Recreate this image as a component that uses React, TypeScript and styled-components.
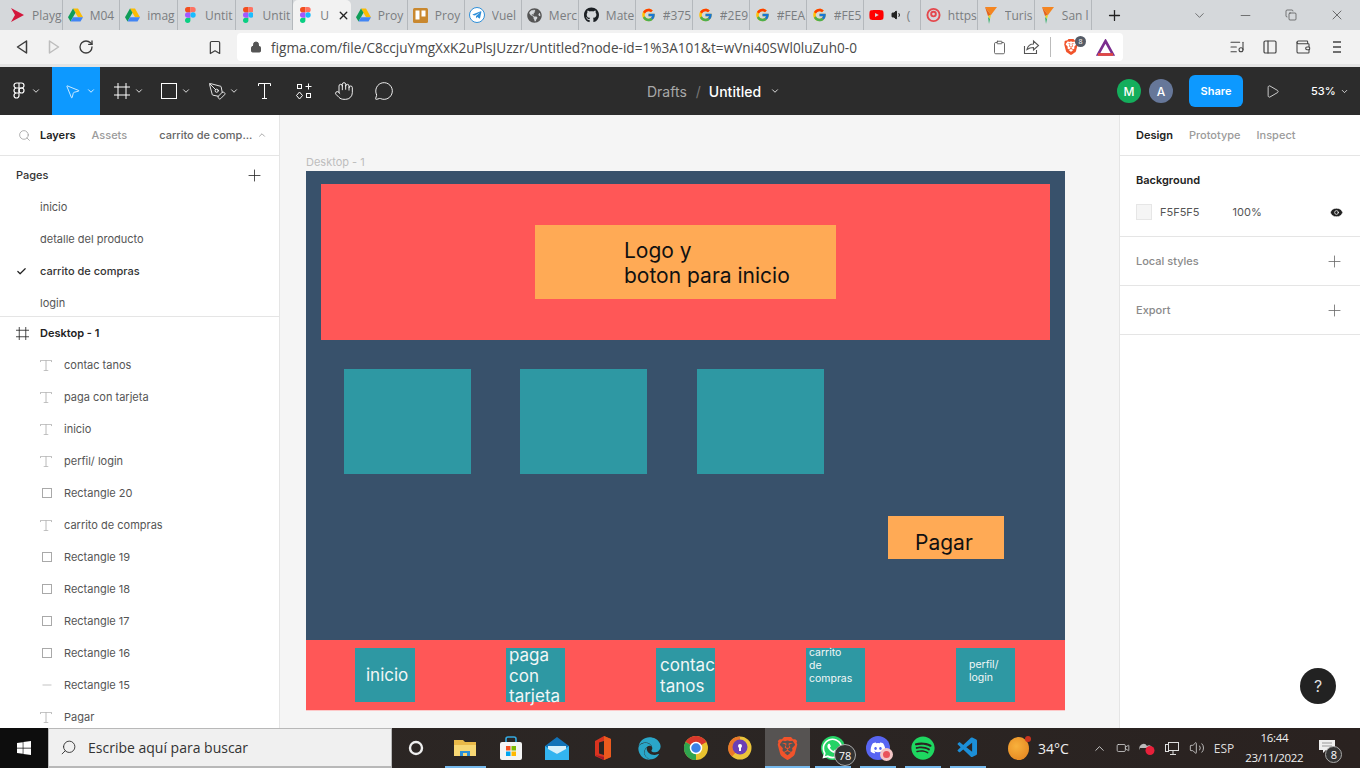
import React from 'react';
import styled, { createGlobalStyle } from 'styled-components';
import {
  Bookmark,
  Check,
  ChevronDown,
  ChevronUp,
  Clipboard,
  Copy,
  Eye,
  Hand,
  ListMusic,
  Lock,
  MessageCircle,
  Minus,
  MousePointer2,
  PanelLeft,
  PenTool,
  Play,
  Plus,
  RotateCw,
  Search,
  Video,
  Volume1,
  Volume2,
  Wallet,
  X,
} from 'lucide-react';
import { FaGithub, FaGlobeAmericas, FaSpotify, FaTelegramPlane, FaWhatsapp, FaWindows, FaDiscord, FaYoutube, FaEdge } from 'react-icons/fa';
import { FcGoogle } from 'react-icons/fc';
import { VscVscode } from 'react-icons/vsc';
import { SiBrave } from 'react-icons/si';

const GlobalStyle = createGlobalStyle`
  html, body { margin: 0; padding: 0; overflow: hidden; background: #f5f5f5; }
  * { box-sizing: border-box; }
`;

const Page = styled.div`
  width: 1360px;
  height: 768px;
  display: flex;
  flex-direction: column;
  overflow: hidden;
  position: relative;
  font-family: Inter, "Liberation Sans", sans-serif;
`;

/* browser chrome */
const TabStrip = styled.div`
  height: 30px;
  flex: none;
  background: #d5d8db;
  display: flex;
  align-items: center;
  padding-left: 5px;
  font-family: "Open Sans", "Noto Sans", sans-serif;
`;

const BrowserTab = styled.div<{ $active?: boolean }>`
  width: 57.65px;
  height: 30px;
  flex: none;
  display: flex;
  align-items: center;
  gap: 7px;
  padding-left: 5px;
  overflow: hidden;
  white-space: nowrap;
  font-size: 12px;
  color: #7a7d80;
  background: ${({ $active }) => ($active ? '#f2f2f2' : 'transparent')};
  border-radius: ${({ $active }) => ($active ? '5px 5px 0 0' : '0')};
  border-right: 1px solid ${({ $active }) => ($active ? 'transparent' : '#b4b8bc')};
  &:nth-child(n + 7) {
    width: 57px;
  }
`;

const TabIcon = styled.span`
  width: 15px;
  height: 16px;
  flex: none;
  display: flex;
  align-items: center;
  justify-content: center;
`;

const TabLabel = styled.span`
  flex: 1;
  display: flex;
  align-items: center;
  gap: 4px;
  overflow: hidden;
`;

const TelegramBadge = styled.span`
  display: flex;
  width: 16px;
  height: 16px;
  flex: none;
  border-radius: 50%;
  border: 1px solid #2e8fd9;
  align-items: center;
  justify-content: center;
  color: #2e8fd9;
  background: #fff;
`;

const NewTab = styled.div`
  margin-left: 14px;
  color: #222;
  display: flex;
`;

const WindowControls = styled.div`
  margin-left: auto;
  display: flex;
  align-items: center;
  color: #333;
`;

const WindowButton = styled.div`
  width: 46px;
  height: 30px;
  display: flex;
  align-items: center;
  justify-content: center;
`;

const BrowserBar = styled.div`
  height: 34px;
  flex: none;
  background: #f2f2f2;
  display: flex;
  align-items: center;
  color: #444;
`;

const NavButton = styled.div<{ $left: number; $dim?: boolean }>`
  width: 16px;
  margin-left: ${({ $left }) => $left}px;
  flex: none;
  display: flex;
  justify-content: center;
  color: ${({ $dim }) => ($dim ? '#b5b5b5' : '#3c3c3c')};
`;

const UrlBox = styled.div`
  width: 886px;
  height: 28px;
  margin-left: 14px;
  background: #fff;
  border-radius: 4px;
  display: flex;
  align-items: center;
  padding-left: 13px;
  color: #555;
  font-family: "Open Sans", "Noto Sans", sans-serif;
`;

const UrlText = styled.span`
  margin-left: 9px;
  font-size: 13.6px;
  color: #4a4a4a;
  white-space: nowrap;
`;

const UrlActions = styled.div`
  margin-left: auto;
  display: flex;
  align-items: center;
  gap: 13px;
  padding-right: 8px;
`;

const ClipIcon = styled(Clipboard)`
  margin-right: 3px;
`;

const UrlDivider = styled.div`
  width: 1px;
  height: 20px;
  background: #bbb;
  margin: 0 -1px 0 -3px;
`;

const BadgeWrap = styled.div`
  position: relative;
  display: flex;
  margin-right: 4px;
`;

const TinyBadge = styled.span`
  position: absolute;
  top: -3px;
  right: -7px;
  width: 11px;
  height: 11px;
  border-radius: 50%;
  background: #555b66;
  color: #fff;
  font-size: 7px;
  display: flex;
  align-items: center;
  justify-content: center;
`;

const ToolbarIcons = styled.div`
  margin-left: 106px;
  display: flex;
  align-items: center;
  gap: 17px;
`;

const Hamburger = styled.svg`
  margin-left: 3px;
`;

const Gutter = styled.div`
  height: 3px;
  flex: none;
  background: #e4e4e4;
`;

/* figma top bar */
const FigmaBar = styled.div`
  height: 48px;
  flex: none;
  background: #2c2c2c;
  color: #fff;
  display: flex;
  align-items: center;
  position: relative;
`;

const Tool = styled.div<{ $active?: boolean; $w?: number; $pad?: number }>`
  width: ${({ $w }) => $w || 48}px;
  height: 48px;
  flex: none;
  display: flex;
  align-items: center;
  padding-left: ${({ $pad }) => ($pad === undefined ? 12 : $pad)}px;
  gap: 2px;
  background: ${({ $active }) => ($active ? '#0d99ff' : 'transparent')};
`;

const ToolIcon = styled.span<{ $start?: boolean }>`
  width: 20px;
  flex: none;
  display: flex;
  align-items: center;
  justify-content: ${({ $start }) => ($start ? 'flex-start' : 'center')};
`;

const PlainTool = styled.div`
  width: 40px;
  height: 48px;
  flex: none;
  display: flex;
  align-items: center;
  justify-content: center;
`;

const FileTitle = styled.div`
  position: absolute;
  left: 647px;
  top: 0;
  height: 48px;
  display: flex;
  align-items: center;
  font-size: 14px;
`;

const Crumb = styled.span`
  color: #a8a8a8;
`;

const Slash = styled.span`
  color: #777;
  margin: 0 8px 0 9px;
`;

const TitleName = styled.span`
  font-weight: 500;
  margin-right: 9px;
`;

const BarRight = styled.div`
  margin-left: auto;
  display: flex;
  align-items: center;
`;

const Avatar = styled.div<{ $bg: string }>`
  width: 24px;
  height: 24px;
  border-radius: 50%;
  background: ${({ $bg }) => $bg};
  color: #fff;
  font-size: 12px;
  font-weight: 500;
  display: flex;
  align-items: center;
  justify-content: center;
  margin-right: 8px;
`;

const ShareButton = styled.div`
  width: 54px;
  height: 32px;
  margin-left: 8px;
  border-radius: 6px;
  background: #0d99ff;
  font-size: 11px;
  font-weight: 600;
  display: flex;
  align-items: center;
  justify-content: center;
`;

const PlayBox = styled.div`
  margin-left: 22px;
  display: flex;
`;

const Zoom = styled.div`
  margin-left: 31px;
  margin-right: 6px;
  width: 43px;
  font-size: 11px;
  font-weight: 500;
  display: flex;
  align-items: center;
  gap: 4px;
`;

/* workspace */
const Workspace = styled.div`
  flex: 1;
  min-height: 0;
  display: flex;
`;

const LeftPanel = styled.aside`
  width: 280px;
  flex: none;
  background: #fff;
  border-right: 1px solid #e5e5e5;
  overflow: hidden;
  font-size: 11px;
  color: #333;
`;

const PanelTabs = styled.div`
  height: 41px;
  border-bottom: 1px solid #e5e5e5;
  display: flex;
  align-items: center;
  font-size: 11px;
`;

const SearchIcon = styled(Search)`
  margin-left: 18px;
`;

const PanelTab = styled.span<{ $left: number; $on?: boolean }>`
  margin-left: ${({ $left }) => $left}px;
  font-weight: ${({ $on }) => ($on ? 600 : 500)};
  color: ${({ $on }) => ($on ? '#222' : '#9b9b9b')};
  white-space: nowrap;
`;

const PageMenu = styled.span`
  margin-left: 32px;
  color: #666;
  font-weight: 500;
  white-space: nowrap;
  display: flex;
  align-items: center;
  gap: 5px;
`;

const PagesSection = styled.div`
  height: 161px;
  border-bottom: 1px solid #e5e5e5;
  overflow: hidden;
`;

const PagesHead = styled.div`
  height: 35px;
  padding: 3px 15px 0 16px;
  display: flex;
  align-items: center;
  justify-content: space-between;
  font-weight: 500;
  color: #333;
`;

const PageRow = styled.div<{ $on?: boolean }>`
  height: 32px;
  display: flex;
  align-items: center;
  padding-left: 16px;
  color: ${({ $on }) => ($on ? '#333' : '#555')};
  font-weight: ${({ $on }) => ($on ? 500 : 400)};
`;

const CheckSlot = styled.span`
  width: 24px;
  flex: none;
  display: flex;
  color: #222;
`;

const LayerRow = styled.div<{ $top?: boolean }>`
  height: 32px;
  display: flex;
  align-items: center;
  padding-left: ${({ $top }) => ($top ? 16 : 40)}px;
  color: ${({ $top }) => ($top ? '#222' : '#555')};
  font-weight: ${({ $top }) => ($top ? 600 : 400)};
  white-space: nowrap;
`;

const LayerIcon = styled.span<{ $top?: boolean }>`
  width: 24px;
  flex: none;
  display: flex;
  color: ${({ $top }) => ($top ? '#222' : '#a9a9a9')};
`;

const RectGlyph = styled.svg`
  margin-left: 2px;
`;

const Canvas = styled.main`
  flex: 1;
  background: #f5f5f5;
  position: relative;
  overflow: hidden;
`;

const FrameLabel = styled.span`
  position: absolute;
  left: 26px;
  top: 40px;
  font-size: 11px;
  color: #bdbdbd;
`;

const Frame = styled.div`
  position: absolute;
  left: 26px;
  top: 56px;
  width: 759px;
  height: 539px;
  background: #38516b;
  box-shadow: 0 1px 0 #fdc8c8;
`;

const Node = styled.div<{ $x: number; $y: number; $w: number; $h: number; $fill: string }>`
  position: absolute;
  left: ${({ $x }) => $x}px;
  top: ${({ $y }) => $y}px;
  width: ${({ $w }) => $w}px;
  height: ${({ $h }) => $h}px;
  background: ${({ $fill }) => $fill};
`;

const NodeText = styled.div<{ $x: number; $y: number; $size: number; $lh: number; $color?: string }>`
  position: absolute;
  left: ${({ $x }) => $x}px;
  top: ${({ $y }) => $y}px;
  font-size: ${({ $size }) => $size}px;
  line-height: ${({ $lh }) => $lh}px;
  color: ${({ $color }) => $color || '#f2f6f6'};
  white-space: pre;
`;

const HelpButton = styled.div`
  position: absolute;
  right: 24px;
  bottom: 24px;
  width: 36px;
  height: 36px;
  border-radius: 50%;
  background: #222;
  color: #ddd;
  font-size: 16px;
  display: flex;
  align-items: center;
  justify-content: center;
`;

const RightPanel = styled.aside`
  width: 240px;
  flex: none;
  background: #fff;
  box-shadow: -1px 0 0 #e5e5e5;
  font-size: 11px;
  color: #333;
  position: relative;
`;

const Section = styled.div<{ $h: number }>`
  height: ${({ $h }) => $h}px;
  border-bottom: 1px solid #e5e5e5;
  padding: 0 16px;
`;

const BackgroundSection = styled(Section)`
  padding-top: 4px;
`;

const SectionHead = styled.div<{ $bold?: boolean; $h: number }>`
  height: ${({ $h }) => $h}px;
  display: flex;
  align-items: center;
  justify-content: space-between;
  font-weight: ${({ $bold }) => ($bold ? 600 : 500)};
  color: ${({ $bold }) => ($bold ? '#222' : '#8a8a8a')};
`;

const ColorRow = styled.div`
  height: 24px;
  display: flex;
  align-items: center;
  color: #555;
`;

const Swatch = styled.span`
  width: 16px;
  height: 16px;
  background: #f5f5f5;
  border: 1px solid #e6e6e6;
  margin-right: 8px;
`;

const Percent = styled.span`
  margin-left: 33px;
`;

const EyeSlot = styled.span`
  margin-left: auto;
  display: flex;
  color: #222;
`;

/* windows taskbar */
const Taskbar = styled.footer`
  height: 40px;
  flex: none;
  display: flex;
  align-items: stretch;
  background: linear-gradient(90deg, #2c2523 0%, #2b2624 50%, #2a2220 100%);
  color: #f0f0f0;
  font-family: "Open Sans", "Noto Sans", sans-serif;
`;

const StartButton = styled.div`
  width: 48px;
  background: #0d0d0d;
  display: flex;
  align-items: center;
  justify-content: center;
  color: #fff;
`;

const SearchBox = styled.div`
  width: 344px;
  background: #f0f0f0;
  border: 1px solid #b8b8b8;
  border-bottom-width: 2px;
  display: flex;
  align-items: center;
  padding-left: 11px;
  gap: 11px;
  color: #333;
  font-size: 14px;
`;

const MirrorSearch = styled(Search)`
  transform: scaleX(-1);
`;

const TaskApps = styled.div`
  display: flex;
  align-items: stretch;
`;

const TaskApp = styled.div<{ $w?: number; $on?: boolean; $open?: boolean }>`
  width: ${({ $w }) => $w || 45}px;
  position: relative;
  display: flex;
  align-items: center;
  justify-content: center;
  background: ${({ $on }) => ($on ? '#565352' : 'transparent')};
  &::after {
    content: '';
    display: ${({ $open }) => ($open ? 'block' : 'none')};
    position: absolute;
    left: ${({ $on }) => ($on ? 0 : 5)}px;
    right: ${({ $on }) => ($on ? 0 : 4)}px;
    bottom: 0;
    height: 2px;
    background: #76b9ed;
  }
`;

const AppDisc = styled.span<{ $bg: string }>`
  width: 24px;
  height: 24px;
  border-radius: 50%;
  background: ${({ $bg }) => $bg};
  display: flex;
  align-items: center;
  justify-content: center;
`;

const Count = styled.span`
  position: absolute;
  left: 24px;
  top: 16px;
  width: 22px;
  height: 22px;
  border-radius: 50%;
  background: #333;
  border: 1px solid #aaa;
  color: #fff;
  font-size: 11px;
  display: flex;
  align-items: center;
  justify-content: center;
`;

const RedDot = styled.span`
  position: absolute;
  left: 25px;
  top: 20px;
  width: 13px;
  height: 13px;
  border-radius: 50%;
  background: #e9525a;
  border: 3px solid #f3c6c6;
`;

const Weather = styled.div`
  margin-left: 18px;
  display: flex;
  align-items: center;
  gap: 9px;
  font-size: 14px;
`;

const Sun = styled.span`
  width: 21px;
  height: 23px;
  border-radius: 50%;
  position: relative;
  background: radial-gradient(circle at 40% 40%, #f8b13c, #e27f1c);
  &::after {
    content: '';
    position: absolute;
    right: -2px;
    top: -1px;
    width: 6px;
    height: 6px;
    border-radius: 50%;
    background: #c8321e;
  }
`;

const Tray = styled.div`
  margin-left: 23px;
  display: flex;
  align-items: center;
  gap: 9px;
  color: #ddd;
`;

const Lang = styled.span`
  font-size: 12px;
`;

const Clock = styled.div`
  margin-left: 11px;
  width: 58px;
  font-size: 11.5px;
  letter-spacing: -0.3px;
  line-height: 20px;
  text-align: center;
  white-space: nowrap;
  align-self: center;
`;

const Notify = styled.div`
  margin-left: 16px;
  position: relative;
  display: flex;
  align-items: flex-start;
  padding-top: 12px;
`;

const NotifyCount = styled(Count)`
  left: 6px;
  top: 18px;
  width: 17px;
  height: 17px;
`;

const FigmaLogo = ({ size = 16 }: { size?: number }) => (
  <svg width={size * 0.67} height={size} viewBox="0 0 24 36">
    <path d="M6 36a6 6 0 0 0 6-6v-6H6a6 6 0 0 0 0 12z" fill="#0acf83" />
    <path d="M0 18a6 6 0 0 1 6-6h6v12H6a6 6 0 0 1-6-6z" fill="#a259ff" />
    <path d="M0 6a6 6 0 0 1 6-6h6v12H6A6 6 0 0 1 0 6z" fill="#f24e1e" />
    <path d="M12 0h6a6 6 0 0 1 0 12h-6z" fill="#ff7262" />
    <path d="M24 18a6 6 0 1 1-12 0 6 6 0 0 1 12 0z" fill="#1abcfe" />
  </svg>
);

const DriveLogo = () => (
  <svg width="16" height="14" viewBox="0 0 24 21">
    <path d="M8 0h8l8 14h-8z" fill="#fbbc04" />
    <path d="M8 0L0 14l4 7 8-14z" fill="#0f9d58" />
    <path d="M4 21h16l4-7H8z" fill="#4285f4" />
  </svg>
);

const FlagLogo = () => (
  <svg width="13" height="17" viewBox="0 0 13 17">
    <path d="M1 0h12L7 8z" fill="#f5851f" />
    <path d="M1 0l6 8-3 1z" fill="#e5641b" />
    <path d="M4 9l3-1-1 4z" fill="#e8d61e" />
    <path d="M4 10l2 2-1 5z" fill="#34b06a" />
  </svg>
);

const PageIcon = () => (
  <svg width="18" height="18" viewBox="0 0 18 18" fill="none" stroke="#fff" strokeWidth="1">
    <rect x="2.5" y="2.5" width="4" height="4" />
    <rect x="11.5" y="11.5" width="4" height="4" />
    <path d="M13.5 1.5v6M10.5 4.5h6" />
    <path d="M4.5 10l3 3.5-3 3.5-3-3.5z" />
  </svg>
);

const FrameIcon = ({ size = 16 }: { size?: number }) => (
  <svg width={size} height={size} viewBox="0 0 16 16" fill="none" stroke="currentColor">
    <path d="M4 0v16M12 0v16M0 4h16M0 12h16" />
  </svg>
);

const RectIcon = () => (
  <svg width="16" height="16" viewBox="0 0 16 16" fill="none" stroke="currentColor">
    <rect x=".5" y=".5" width="15" height="15" />
  </svg>
);

const TextIcon = ({ w = 13, h = 16 }: { w?: number; h?: number }) => (
  <svg width={w} height={h} viewBox="0 0 13 16" fill="none" stroke="currentColor" preserveAspectRatio="none">
    <path d="M.5 3V.5h12V3M6.5.5v15M4 15.5h5" />
  </svg>
);

const ShareBoxIcon = () => (
  <svg width="17" height="16" viewBox="0 0 17 16" fill="none" stroke="currentColor" strokeWidth="1.1">
    <path d="M1.5 7v7.5h12V11" />
    <path d="M4 10.5c1-4 4-5.5 6.5-5.5V2L15.5 6.5 10.5 11V8.5C8 8.5 6 9 4 10.5z" />
  </svg>
);

const NavArrow = ({ dim }: { dim?: boolean }) => (
  <svg width="12" height="16" viewBox="0 0 12 16" fill="none" stroke={dim ? '#bdbdbd' : '#3c3c3c'} strokeWidth="1.5">
    <path d={dim ? 'M1.5 2v12L10.5 8z' : 'M10.5 2v12L1.5 8z'} strokeLinejoin="round" />
  </svg>
);

const OfficeLogo = () => (
  <svg width="18" height="24" viewBox="0 0 18 24">
    <path d="M2 5l9-5 7 3v18l-7 3-9-4z" fill="#d8331f" />
    <path d="M11 0l7 3v18l-7 3z" fill="#eb5a1e" />
    <path d="M6 6.5l5-1.5v14l-5-1.5z" fill="#2a2422" />
    <path d="M2 19l9 5 0-3-9-2z" fill="#a5192b" />
  </svg>
);

const tabs: { icon: React.ReactNode; label: React.ReactNode; active?: boolean }[] = [
  { icon: <svg width="15" height="16" viewBox="0 0 15 16"><path d="M1 1l13 7-13 7 4-7z" fill="#d3173c" /></svg>, label: 'Playg' },
  { icon: <DriveLogo />, label: 'M04' },
  { icon: <DriveLogo />, label: 'imag' },
  { icon: <FigmaLogo />, label: 'Untit' },
  { icon: <FigmaLogo />, label: 'Untit' },
  { icon: <FigmaLogo />, label: 'U', active: true },
  { icon: <DriveLogo />, label: 'Proy' },
  { icon: <svg width="15" height="15" viewBox="0 0 15 15"><rect width="15" height="15" rx="1.5" fill="#c9882f" /><rect x="2.5" y="2.5" width="4" height="9" fill="#fff" /><rect x="8.5" y="2.5" width="4" height="6" fill="#fff" /></svg>, label: 'Proy' },
  { icon: <TelegramBadge><FaTelegramPlane size={10} /></TelegramBadge>, label: 'Vuel' },
  { icon: <FaGlobeAmericas size={15} color="#555" />, label: 'Merc' },
  { icon: <FaGithub size={16} color="#1b1f23" />, label: 'Mate' },
  { icon: <FcGoogle size={16} />, label: '#375' },
  { icon: <FcGoogle size={16} />, label: '#2E9' },
  { icon: <FcGoogle size={16} />, label: '#FEA' },
  { icon: <FcGoogle size={16} />, label: '#FE5' },
  { icon: <FaYoutube size={16} color="#f00" />, label: <><Volume1 size={12} color="#222" fill="#222" />(</> },
  { icon: <svg width="16" height="16" viewBox="0 0 16 16" fill="none" stroke="#e4484d" strokeWidth="2"><circle cx="8" cy="8" r="6.5" /><circle cx="8" cy="7" r="2.5" /></svg>, label: 'https' },
  { icon: <FlagLogo />, label: 'Turis' },
  { icon: <FlagLogo />, label: 'San l' },
];

const pages = ['inicio', 'detalle del producto', 'carrito de compras', 'login'];

const layers: { name: string; kind: 'text' | 'rect' | 'line' }[] = [
  { name: 'contac tanos', kind: 'text' },
  { name: 'paga con tarjeta', kind: 'text' },
  { name: 'inicio', kind: 'text' },
  { name: 'perfil/ login', kind: 'text' },
  { name: 'Rectangle 20', kind: 'rect' },
  { name: 'carrito de compras', kind: 'text' },
  { name: 'Rectangle 19', kind: 'rect' },
  { name: 'Rectangle 18', kind: 'rect' },
  { name: 'Rectangle 17', kind: 'rect' },
  { name: 'Rectangle 16', kind: 'rect' },
  { name: 'Rectangle 15', kind: 'line' },
  { name: 'Pagar', kind: 'text' },
];

const RED = '#ff5757';
const ORANGE = '#ffaa55';
const TEAL = '#2e98a3';

const App: React.FC = () => (
  <Page>
    <GlobalStyle />
    <TabStrip>
      {tabs.map((tab, index) => (
        <BrowserTab key={index} $active={tab.active}>
          <TabIcon>{tab.icon}</TabIcon>
          <TabLabel>{tab.label}</TabLabel>
          {tab.active && <X size={13} color="#222" strokeWidth={2.5} />}
        </BrowserTab>
      ))}
      <NewTab>
        <Plus size={17} strokeWidth={1.8} />
      </NewTab>
      <WindowControls>
        <WindowButton><ChevronDown size={15} strokeWidth={1} /></WindowButton>
        <WindowButton><Minus size={15} strokeWidth={1} /></WindowButton>
        <WindowButton><Copy size={12} strokeWidth={1.2} /></WindowButton>
        <WindowButton><X size={16} strokeWidth={1} /></WindowButton>
      </WindowControls>
    </TabStrip>

    <BrowserBar>
      <NavButton $left={14}><NavArrow /></NavButton>
      <NavButton $left={16} $dim><NavArrow dim /></NavButton>
      <NavButton $left={16}><RotateCw size={16} strokeWidth={2} /></NavButton>
      <NavButton $left={113}><Bookmark size={17} strokeWidth={1.8} /></NavButton>
      <UrlBox>
        <Lock size={12} fill="#555" strokeWidth={2} />
        <UrlText>figma.com/file/C8ccjuYmgXxK2uPlsJUzzr/Untitled?node-id=1%3A101&amp;t=wVni40SWl0luZuh0-0</UrlText>
        <UrlActions>
          <ClipIcon size={15} strokeWidth={1.4} />
          <ShareBoxIcon />
          <UrlDivider />
          <BadgeWrap>
            <SiBrave size={16} color="#f1532b" />
            <TinyBadge>8</TinyBadge>
          </BadgeWrap>
          <svg width="19" height="17" viewBox="0 0 19 17" fill="none">
            <path d="M9.5 2L17 15.5H2z" stroke="#7b2d8e" strokeWidth="2.6" />
            <path d="M2 15.5h15" stroke="#e4483f" strokeWidth="2.6" />
          </svg>
        </UrlActions>
      </UrlBox>
      <ToolbarIcons>
        <ListMusic size={16} strokeWidth={1.6} />
        <PanelLeft size={16} strokeWidth={1.8} />
        <Wallet size={16} strokeWidth={1.6} />
        <Hamburger width="12" height="14" viewBox="0 0 12 14" fill="none" stroke="currentColor" strokeWidth="1.6">
          <path d="M2 2h8M2 7h8M2 12h8" />
        </Hamburger>
      </ToolbarIcons>
    </BrowserBar>
    <Gutter />

    <FigmaBar>
      <Tool $w={52} $pad={9}>
        <ToolIcon>
          <svg width="12" height="18" viewBox="0 0 24 36" fill="none" stroke="#fff" strokeWidth="2.4">
            <path d="M12 2H7a5 5 0 0 0 0 10h5zM12 2h5a5 5 0 0 1 0 10h-5zM12 12H7a5 5 0 0 0 0 10h5zM12 22H7a5 5 0 1 0 5 5z" />
            <circle cx="17" cy="17" r="5" />
          </svg>
        </ToolIcon>
        <ChevronDown size={10} strokeWidth={2} />
      </Tool>
      <Tool $active>
        <ToolIcon $start><MousePointer2 size={17} strokeWidth={1.1} /></ToolIcon>
        <ChevronDown size={10} strokeWidth={2} />
      </Tool>
      <Tool>
        <ToolIcon><FrameIcon /></ToolIcon>
        <ChevronDown size={10} strokeWidth={2} />
      </Tool>
      <Tool $pad={11}>
        <ToolIcon><RectIcon /></ToolIcon>
        <ChevronDown size={10} strokeWidth={2} />
      </Tool>
      <Tool $pad={11}>
        <ToolIcon><PenTool size={19} strokeWidth={1.1} /></ToolIcon>
        <ChevronDown size={10} strokeWidth={2} />
      </Tool>
      <PlainTool><TextIcon /></PlainTool>
      <PlainTool><PageIcon /></PlainTool>
      <PlainTool><Hand size={20} strokeWidth={1.1} /></PlainTool>
      <PlainTool><MessageCircle size={20} strokeWidth={1.1} /></PlainTool>
      <FileTitle>
        <Crumb>Drafts</Crumb>
        <Slash>/</Slash>
        <TitleName>Untitled</TitleName>
        <ChevronDown size={10} strokeWidth={2} />
      </FileTitle>
      <BarRight>
        <Avatar $bg="#14ae5c">M</Avatar>
        <Avatar $bg="#667799">A</Avatar>
        <ShareButton>Share</ShareButton>
        <PlayBox><Play size={15} strokeWidth={1.2} /></PlayBox>
        <Zoom>53% <ChevronDown size={9} strokeWidth={2} /></Zoom>
      </BarRight>
    </FigmaBar>

    <Workspace>
      <LeftPanel>
        <PanelTabs>
          <SearchIcon size={13} color="#999" strokeWidth={1.4} />
          <PanelTab $left={9} $on>Layers</PanelTab>
          <PanelTab $left={16}>Assets</PanelTab>
          <PageMenu>carrito de comp... <ChevronUp size={10} color="#999" /></PageMenu>
        </PanelTabs>
        <PagesSection>
          <PagesHead>
            Pages
            <Plus size={19} color="#222" strokeWidth={1} />
          </PagesHead>
          {pages.map(page => (
            <PageRow key={page} $on={page === 'carrito de compras'}>
              <CheckSlot>{page === 'carrito de compras' && <Check size={11} strokeWidth={2.6} />}</CheckSlot>
              {page}
            </PageRow>
          ))}
        </PagesSection>
        <LayerRow $top>
          <LayerIcon $top><FrameIcon size={13} /></LayerIcon>
          Desktop - 1
        </LayerRow>
        {layers.map(layer => (
          <LayerRow key={layer.name}>
            <LayerIcon>
              {layer.kind === 'text' && <TextIcon w={12} h={11} />}
              {layer.kind === 'rect' && (
                <RectGlyph width="10" height="10" viewBox="0 0 10 10" fill="none" stroke="currentColor">
                  <rect x=".5" y=".5" width="9" height="9" />
                </RectGlyph>
              )}
              {layer.kind === 'line' && <Minus size={14} strokeWidth={1.2} />}
            </LayerIcon>
            {layer.name}
          </LayerRow>
        ))}
      </LeftPanel>

      <Canvas>
        <FrameLabel>Desktop - 1</FrameLabel>
        <Frame>
          <Node $x={15} $y={13} $w={729} $h={156} $fill={RED} />
          <Node $x={229} $y={54} $w={301} $h={74} $fill={ORANGE} />
          <NodeText $x={318} $y={67} $size={21} $lh={25} $color="#111">{'Logo y\nboton para inicio'}</NodeText>
          <Node $x={38} $y={198} $w={127} $h={105} $fill={TEAL} />
          <Node $x={214} $y={198} $w={127} $h={105} $fill={TEAL} />
          <Node $x={391} $y={198} $w={127} $h={105} $fill={TEAL} />
          <Node $x={582} $y={345} $w={116} $h={43} $fill={ORANGE} />
          <NodeText $x={609} $y={359} $size={21} $lh={26} $color="#111">Pagar</NodeText>
          <Node $x={0} $y={469} $w={759} $h={70} $fill={RED} />
          <Node $x={49} $y={477} $w={60} $h={54} $fill={TEAL} />
          <Node $x={200} $y={477} $w={59} $h={54} $fill={TEAL} />
          <Node $x={350} $y={477} $w={59} $h={54} $fill={TEAL} />
          <Node $x={500} $y={477} $w={59} $h={54} $fill={TEAL} />
          <Node $x={650} $y={477} $w={59} $h={54} $fill={TEAL} />
          <NodeText $x={60} $y={493} $size={17} $lh={22}>inicio</NodeText>
          <NodeText $x={203} $y={474} $size={17} $lh={20.5}>{'paga\ncon\ntarjeta'}</NodeText>
          <NodeText $x={354} $y={484} $size={17} $lh={20.5}>{'contac\ntanos'}</NodeText>
          <NodeText $x={503} $y={475} $size={10.5} $lh={13}>{'carrito\nde\ncompras'}</NodeText>
          <NodeText $x={663} $y={488} $size={10.5} $lh={12.5}>{'perfil/\nlogin'}</NodeText>
        </Frame>
      </Canvas>

      <RightPanel>
        <PanelTabs>
          <PanelTab $left={16} $on>Design</PanelTab>
          <PanelTab $left={16}>Prototype</PanelTab>
          <PanelTab $left={16}>Inspect</PanelTab>
        </PanelTabs>
        <BackgroundSection $h={81}>
          <SectionHead $bold $h={40}>Background</SectionHead>
          <ColorRow>
            <Swatch />
            F5F5F5
            <Percent>100%</Percent>
            <EyeSlot><Eye size={15} fill="#222" stroke="#fff" strokeWidth={1.2} /></EyeSlot>
          </ColorRow>
        </BackgroundSection>
        <Section $h={49}>
          <SectionHead $h={48}>Local styles <Plus size={19} color="#666" strokeWidth={1} /></SectionHead>
        </Section>
        <Section $h={49}>
          <SectionHead $h={48}>Export <Plus size={19} color="#666" strokeWidth={1} /></SectionHead>
        </Section>
        <HelpButton>?</HelpButton>
      </RightPanel>
    </Workspace>

    <Taskbar>
      <StartButton><FaWindows size={16} /></StartButton>
      <SearchBox>
        <MirrorSearch size={17} strokeWidth={1.3} />
        Escribe aquí para buscar
      </SearchBox>
      <TaskApps>
        <TaskApp $w={48}>
          <svg width="16" height="16" viewBox="0 0 16 16" fill="none" stroke="#eee" strokeWidth="2.4"><circle cx="8" cy="8" r="6" /></svg>
        </TaskApp>
        <TaskApp $w={50} $open>
          <svg width="22" height="20" viewBox="0 0 22 20">
            <path d="M0 2h9l2 2h11v14H0z" fill="#e9b949" />
            <path d="M0 7h22v11H0z" fill="#f7d774" />
            <path d="M6 13h10v5H6z" fill="#2b90d9" />
            <path d="M9 15h4v3H9z" fill="#f7d774" />
          </svg>
        </TaskApp>
        <TaskApp $w={42}>
          <svg width="22" height="24" viewBox="0 0 22 24">
            <path d="M6 7V3a2 2 0 0 1 2-2h6a2 2 0 0 1 2 2v4" fill="none" stroke="#35a9e0" strokeWidth="1.6" />
            <rect y="6" width="22" height="18" rx="2" fill="#f4f4f4" />
            <rect x="6" y="10" width="4.5" height="4.5" fill="#f25022" />
            <rect x="11.5" y="10" width="4.5" height="4.5" fill="#7fba00" />
            <rect x="6" y="15.5" width="4.5" height="4.5" fill="#00a4ef" />
            <rect x="11.5" y="15.5" width="4.5" height="4.5" fill="#ffb900" />
          </svg>
        </TaskApp>
        <TaskApp $w={50}>
          <svg width="24" height="23" viewBox="0 0 24 23">
            <path d="M12 0l12 9v14H0V9z" fill="#1273b8" />
            <path d="M0 9l12 8 12-8v14H0z" fill="#33b4f0" />
            <path d="M3 9h18v3l-9 5-9-5z" fill="#d7f0fb" />
          </svg>
        </TaskApp>
        <TaskApp $w={40}><OfficeLogo /></TaskApp>
        <TaskApp $w={55}><FaEdge size={23} color="#2aa6c9" /></TaskApp>
        <TaskApp $w={38}>
          <svg width="24" height="24" viewBox="0 0 24 24">
            <circle cx="12" cy="12" r="12" fill="#e8c22e" />
            <path d="M12 12L1.6 6a12 12 0 0 1 20.8 0z" fill="#d9382c" />
            <path d="M12 12L1.6 6a12 12 0 0 0 10.4 18z" fill="#2fa44f" />
            <circle cx="12" cy="12" r="5.5" fill="#3b82e8" stroke="#fff" strokeWidth="1.5" />
          </svg>
        </TaskApp>
        <TaskApp $w={50}>
          <svg width="24" height="24" viewBox="0 0 24 24">
            <circle cx="12" cy="12" r="11.5" fill="#ecc43a" />
            <path d="M12 .5a11.5 11.5 0 0 0-8 20L12 12z" fill="#e9792a" />
            <circle cx="12" cy="11" r="7.5" fill="#6a3fb5" />
            <circle cx="12" cy="10" r="2" fill="#fff" />
            <path d="M11 10h2v5h-2z" fill="#fff" />
          </svg>
        </TaskApp>
        <TaskApp $on $open><SiBrave size={23} color="#f1532b" /></TaskApp>
        <TaskApp $open>
          <AppDisc $bg="#25d366"><FaWhatsapp size={23} color="#fff" /></AppDisc>
          <Count>78</Count>
        </TaskApp>
        <TaskApp $open>
          <AppDisc $bg="#5865f2"><FaDiscord size={16} color="#fff" /></AppDisc>
          <RedDot />
        </TaskApp>
        <TaskApp $open><FaSpotify size={24} color="#1ed760" /></TaskApp>
        <TaskApp $open><VscVscode size={24} color="#1c8fd8" /></TaskApp>
      </TaskApps>
      <Weather>
        <Sun />
        34°C
      </Weather>
      <Tray>
        <ChevronUp size={15} strokeWidth={1.4} />
        <Video size={14} strokeWidth={1.3} />
        <svg width="16" height="14" viewBox="0 0 16 14"><path d="M1 9a4 4 0 0 1 7-4 3 3 0 0 1 5 2H1z" fill="#bbb" /><circle cx="11" cy="9.5" r="4.5" fill="#e8203a" /></svg>
        <svg width="16" height="15" viewBox="0 0 16 15" fill="none" stroke="#ddd"><rect x="4.5" y="1.5" width="10" height="8" /><rect x="1.5" y="3.5" width="3" height="7" /><path d="M6 13.5h6M9 9.5v4" /></svg>
        <Volume2 size={16} strokeWidth={1.2} />
        <Lang>ESP</Lang>
      </Tray>
      <Clock>
        16:44
        <br />
        23/11/2022
      </Clock>
      <Notify>
        <svg width="16" height="13" viewBox="0 0 16 13"><path d="M0 0h16v10H7l-3 3v-3H0z" fill="#eee" /><path d="M3 3h10M3 6h10" stroke="#999" /></svg>
        <NotifyCount>8</NotifyCount>
      </Notify>
    </Taskbar>
  </Page>
);

export default App;
